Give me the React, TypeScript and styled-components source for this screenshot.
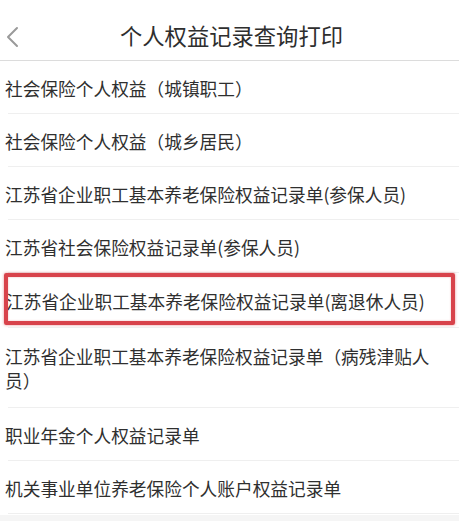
import React from "react";
import styled, { createGlobalStyle } from "styled-components";

const GlobalStyle = createGlobalStyle`
  html, body { margin: 0; padding: 0; background: #ffffff; }
  body { font-family: "Noto Sans CJK SC", "Noto Sans", sans-serif; }
`;

const Page = styled.div`
  width: 459px;
  min-height: 521px;
  display: flex;
  flex-direction: column;
  background: #ffffff;
`;

const Header = styled.header`
  height: 48px;
  padding-top: 12px;
  border-bottom: 1px solid #dcdcdc;
  display: grid;
  grid-template-columns: 40px 1fr 40px;
  align-items: center;
`;

const BackButton = styled.div`
  display: flex;
  align-items: center;
  padding-left: 4px;
  margin-top: 2px;
  color: #9a9a9a;
`;

const Title = styled.h1`
  margin: 0;
  text-align: center;
  font-size: 22.3px;
  font-weight: 400;
  color: #2e2e2e;
  letter-spacing: 0;
  padding-left: 4px;
  margin-top: -3px;
`;

const List = styled.ul`
  list-style: none;
  margin: 0;
  padding: 0;
`;

const Row = styled.li<{ $tall?: boolean; $highlight?: boolean }>`
  position: relative;
  box-sizing: border-box;
  padding: ${(p) => (p.$tall ? "16px 24px 16px 5px" : p.$highlight ? "15.5px 0 15.5px 6px" : "14.5px 24px 14.5px 5px")};
  font-size: 17.7px;
  line-height: 24px;
  color: #2f2f2f;
  white-space: ${(p) => (p.$highlight ? "nowrap" : "normal")};

  &::after {
    content: "";
    position: absolute;
    left: 8px;
    right: 0;
    bottom: 0;
    height: 1px;
    background: #efefef;
  }
`;

const Highlight = styled.span`
  position: absolute;
  left: 4px;
  top: 0px;
  width: 451px;
  height: 52px;
  box-sizing: border-box;
  border: 4px solid #d8434b;
  border-radius: 2px;
  box-shadow: 0 0 3px rgba(216, 67, 75, 0.6), inset 0 0 2px rgba(216, 67, 75, 0.4);
  pointer-events: none;
`;

const BottomBand = styled.div`
  flex: 1;
  margin-top: 1px;
  background: #f5f5f5;
`;

const items = [
  { text: "社会保险个人权益（城镇职工）" },
  { text: "社会保险个人权益（城乡居民）" },
  { text: "江苏省企业职工基本养老保险权益记录单(参保人员)" },
  { text: "江苏省社会保险权益记录单(参保人员)" },
  { text: "江苏省企业职工基本养老保险权益记录单(离退休人员)", highlight: true },
  { text: "江苏省企业职工基本养老保险权益记录单（病残津贴人员）", tall: true },
  { text: "职业年金个人权益记录单" },
  { text: "机关事业单位养老保险个人账户权益记录单" },
];

export default function App() {
  return (
    <>
      <GlobalStyle />
      <Page>
        <Header>
          <BackButton>
            <svg width="16" height="22" viewBox="0 0 16 22" fill="none">
              <polyline points="13,2 4,11 13,20" stroke="currentColor" strokeWidth="2" strokeLinecap="round" strokeLinejoin="round" />
            </svg>
          </BackButton>
          <Title>个人权益记录查询打印</Title>
          <span />
        </Header>
        <List>
          {items.map((it) => (
            <Row key={it.text} $tall={it.tall} $highlight={it.highlight}>
              {it.text}
              {it.highlight && <Highlight />}
            </Row>
          ))}
        </List>
        <BottomBand />
      </Page>
    </>
  );
}
